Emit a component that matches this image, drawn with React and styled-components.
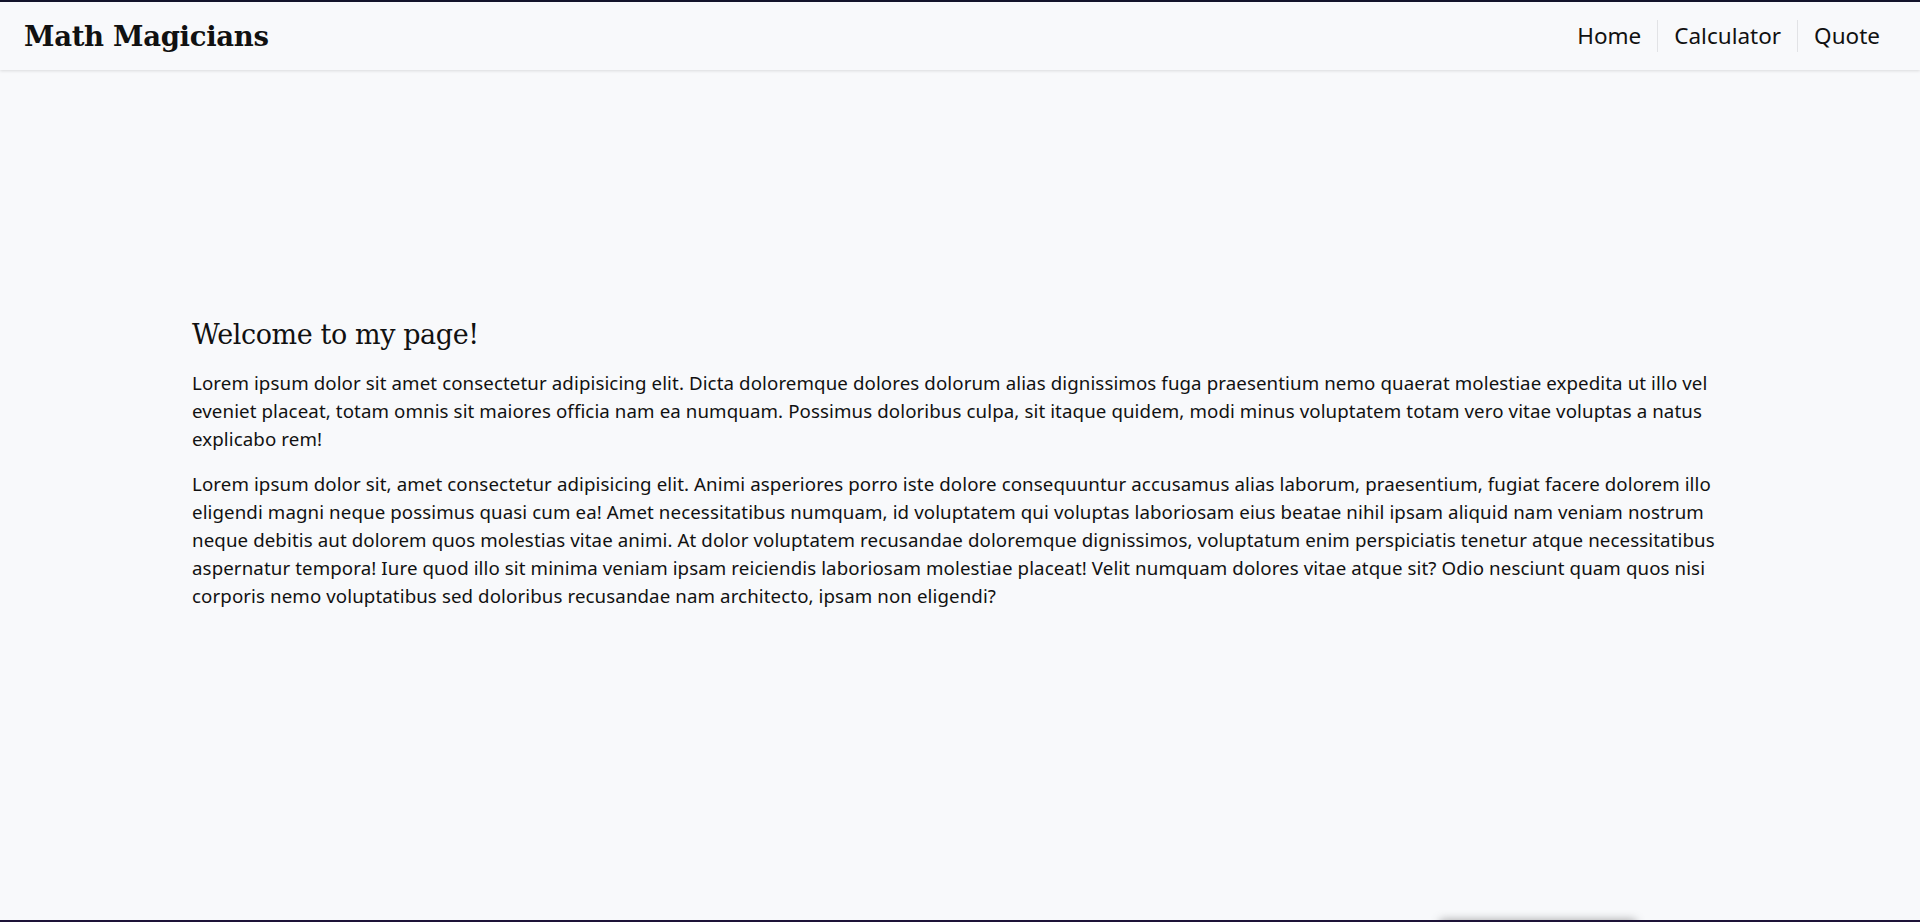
import React from "react";
import styled, { createGlobalStyle } from "styled-components";

const GlobalStyle = createGlobalStyle`
  * { box-sizing: border-box; }
  body {
    margin: 0;
    background: #f8f9fb;
    color: #111;
    font-family: "Noto Sans", "Open Sans", Arial, sans-serif;
  }
`;

const Page = styled.div`
  min-height: 100vh;
  display: flex;
  flex-direction: column;
  border-top: 2px solid #13132b;
  border-bottom: 2px solid #1d1338;
  background: #f8f9fb;
  position: relative;
  overflow: hidden;
`;

const Header = styled.header`
  height: 68px;
  display: flex;
  align-items: center;
  justify-content: space-between;
  padding: 0 24px;
  background: #f8f9fb;
  box-shadow: 0 1px 3px rgba(0, 0, 0, 0.12);
`;

const Brand = styled.h1`
  margin: 0;
  font-family: "DejaVu Serif", Georgia, serif;
  font-weight: bold;
  font-size: 27.5px;
  letter-spacing: -0.3px;
`;

const Nav = styled.nav`
  display: flex;
  align-items: center;
`;

const NavLink = styled.a`
  padding: 0 16px;
  font-size: 22.5px;
  line-height: 32px;
  color: #111;
  text-decoration: none;
  border-left: ${({ $first }) => ($first ? "none" : "1px solid #e2e3e6")};
`;

const Main = styled.main`
  flex: 1;
  padding-top: 246px;
`;

const Section = styled.section`
  width: 80%;
  margin: 0 auto;
`;

const Title = styled.h2`
  margin: 0 0 15px;
  font-family: "DejaVu Serif", Georgia, serif;
  font-weight: normal;
  font-size: 27px;
  line-height: 38px;
  letter-spacing: -0.4px;
`;

const Para = styled.p`
  margin: 0 0 17px;
  font-size: 18.7px;
  line-height: 28px;
  letter-spacing: 0.1px;
`;

const BottomShadow = styled.div`
  position: absolute;
  left: 1440px;
  bottom: -12px;
  width: 196px;
  height: 12px;
  box-shadow: 0 0 10px rgba(0, 0, 0, 0.35);
  background: #f8f9fb;
`;

export default function App() {
  return (
    <>
      <GlobalStyle />
      <Page>
        <Header>
          <Brand>Math Magicians</Brand>
          <Nav>
            <NavLink href="#" $first>Home</NavLink>
            <NavLink href="#">Calculator</NavLink>
            <NavLink href="#">Quote</NavLink>
          </Nav>
        </Header>
        <Main>
          <Section>
            <Title>Welcome to my page!</Title>
            <Para>
              Lorem ipsum dolor sit amet consectetur adipisicing elit. Dicta doloremque dolores dolorum alias dignissimos fuga praesentium nemo quaerat molestiae expedita ut illo vel eveniet placeat, totam omnis sit maiores officia nam ea numquam. Possimus doloribus culpa, sit itaque quidem, modi minus voluptatem totam vero vitae voluptas a natus explicabo rem!
            </Para>
            <Para>
              Lorem ipsum dolor sit, amet consectetur adipisicing elit. Animi asperiores porro iste dolore consequuntur accusamus alias laborum, praesentium, fugiat facere dolorem illo eligendi magni neque possimus quasi cum ea! Amet necessitatibus numquam, id voluptatem qui voluptas laboriosam eius beatae nihil ipsam aliquid nam veniam nostrum neque debitis aut dolorem quos molestias vitae animi. At dolor voluptatem recusandae doloremque dignissimos, voluptatum enim perspiciatis tenetur atque necessitatibus aspernatur tempora! Iure quod illo sit minima veniam ipsam reiciendis laboriosam molestiae placeat! Velit numquam dolores vitae atque sit? Odio nesciunt quam quos nisi corporis nemo voluptatibus sed doloribus recusandae nam architecto, ipsam non eligendi?
            </Para>
          </Section>
        </Main>
        <BottomShadow />
      </Page>
    </>
  );
}
